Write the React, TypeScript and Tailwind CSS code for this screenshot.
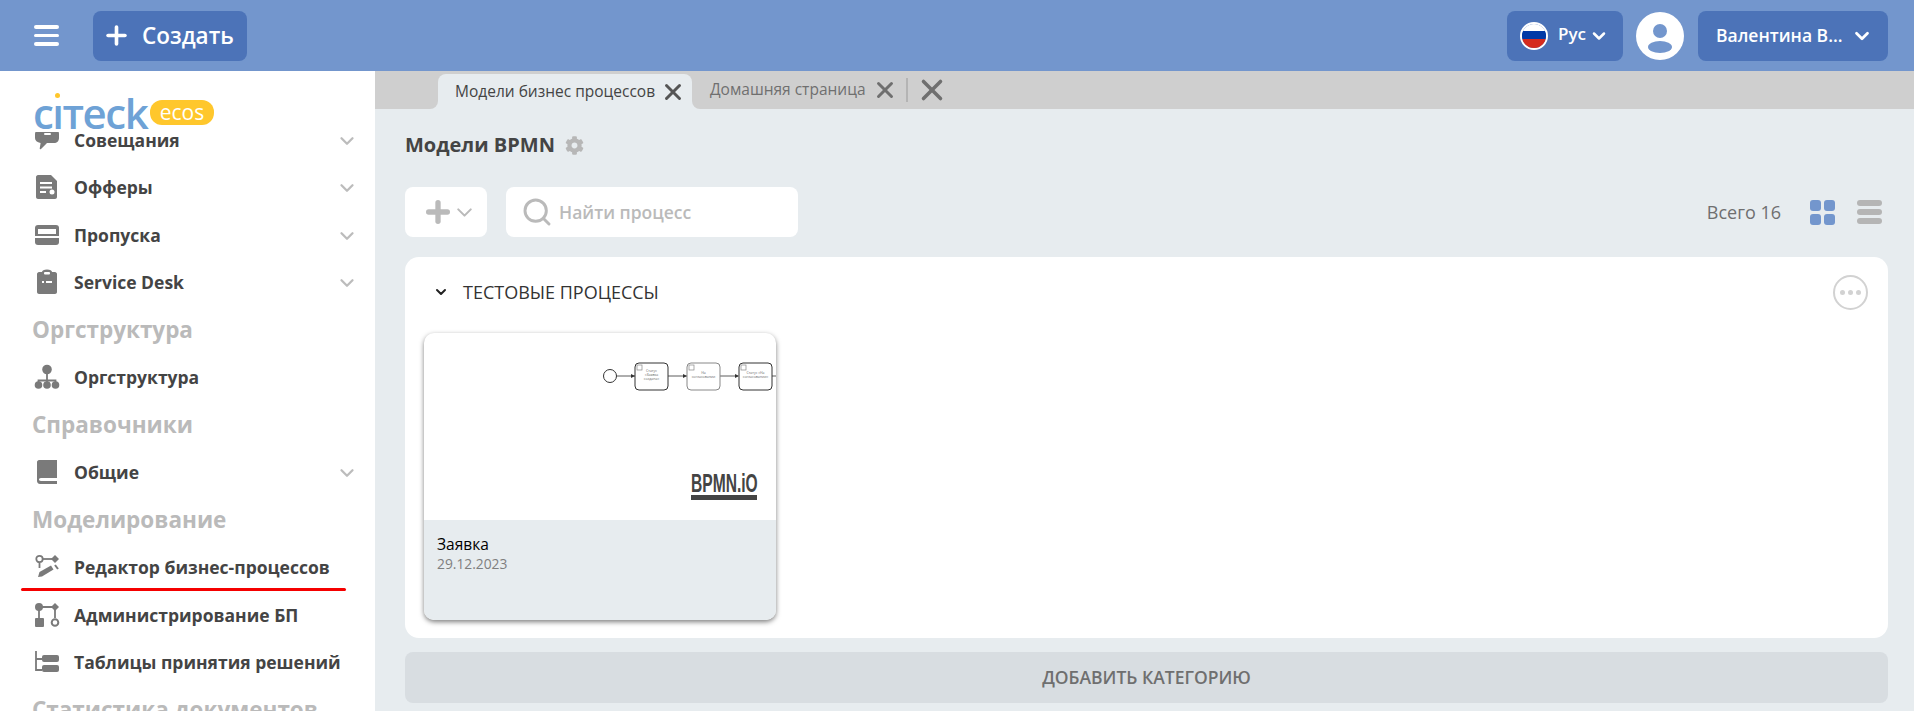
import type React from 'react';
import { ChevronDown, Plus, Search, X } from 'lucide-react';
import { FaCog } from 'react-icons/fa';

const fontStack = { fontFamily: '"Open Sans", "Noto Sans", sans-serif' };

function BubbleIcon() {
  return (
    <svg width="26" height="26" viewBox="0 0 26 26">
      <path d="M7 2h13c3 0 5 2 5 5v4c0 3-2 5-5 5h-7l-6 6c-1 .8-1.500 0-1.200-1l.8-5C3 15.500 1 13.500 1 11V7c0-3 3-5 6-5z" fill="#7a7a7a" />
      <rect x="10" y="6" width="7" height="2" rx="1" fill="#fff" />
    </svg>
  );
}

function DocIcon() {
  return (
    <svg width="26" height="26" viewBox="0 0 26 26">
      <path d="M4 1h13l6 6v16c0 1-1 2-2 2H4c-1 0-2-1-2-2V3c0-1 1-2 2-2z" fill="#7a7a7a" />
      <rect x="6" y="8" width="12" height="2" fill="#fff" />
      <rect x="6" y="12.500" width="12" height="2" fill="#fff" />
      <rect x="6" y="17" width="6" height="2" fill="#fff" />
      <circle cx="18" cy="18" r="2.500" fill="#fff" />
    </svg>
  );
}

function PassIcon() {
  return (
    <svg width="26" height="26" viewBox="0 0 26 26">
      <rect x="1" y="3" width="24" height="20" rx="3" fill="#7a7a7a" />
      <rect x="4" y="7" width="18" height="5" fill="#fff" />
      <rect x="1" y="14" width="24" height="2" fill="#fff" />
    </svg>
  );
}

function ClipboardIcon() {
  return (
    <svg width="26" height="26" viewBox="0 0 26 26">
      <path d="M5 3h3c0-1.500 2-2.500 5-2.500S18 1.500 18 3h3c1 0 2 1 2 2v18c0 1-1 2-2 2H5c-1 0-2-1-2-2V5c0-1 1-2 2-2z" fill="#7a7a7a" />
      <rect x="10" y="3" width="6" height="2.500" rx="1" fill="#fff" />
      <rect x="8" y="12" width="2" height="2" fill="#fff" />
      <rect x="12" y="12" width="6" height="2" fill="#fff" />
    </svg>
  );
}

function OrgIcon() {
  return (
    <svg width="26" height="26" viewBox="0 0 26 26">
      <circle cx="13" cy="5.500" r="4.800" fill="#7a7a7a" />
      <path d="M13 9v12M4.500 21v-4.500h17V21" stroke="#7a7a7a" strokeWidth="1.800" fill="none" />
      <circle cx="4.500" cy="21" r="3.800" fill="#7a7a7a" />
      <circle cx="13" cy="21" r="3.800" fill="#7a7a7a" />
      <circle cx="21.500" cy="21" r="3.800" fill="#7a7a7a" />
    </svg>
  );
}

function BookIcon() {
  return (
    <svg width="26" height="26" viewBox="0 0 26 26">
      <path d="M5 1h18v18H7c-1.500 0-2 .8-2 1.500S5.500 22 7 22h16v3H6c-2 0-3-1.500-3-3V3c0-1 1-2 2-2z" fill="#7a7a7a" />
    </svg>
  );
}

function EditorIcon() {
  return (
    <svg width="26" height="26" viewBox="0 0 26 26">
      <circle cx="5.500" cy="5" r="3.200" stroke="#7a7a7a" strokeWidth="1.800" fill="none" />
      <path d="M9 5h10" stroke="#7a7a7a" strokeWidth="1.800" />
      <path d="M21 1l4 4-4 4-4-4z" fill="#7a7a7a" />
      <path d="M5.500 9v5" stroke="#7a7a7a" strokeWidth="1.800" />
      <path d="M4 23l1.500-5L17 11.500l2.500 4L8 22.500z" fill="#7a7a7a" />
      <path d="M21 11l3 4" stroke="#7a7a7a" strokeWidth="2" />
    </svg>
  );
}

function AdminIcon() {
  return (
    <svg width="26" height="26" viewBox="0 0 26 26">
      <circle cx="5" cy="5" r="4" fill="#7a7a7a" />
      <path d="M21 1l4 4-4 4-4-4z" fill="#7a7a7a" />
      <path d="M8 5h10M5 8v8M21 8v8" stroke="#7a7a7a" strokeWidth="1.800" />
      <rect x="1" y="16" width="9" height="9" rx="1" fill="#7a7a7a" />
      <circle cx="21" cy="20.500" r="3.300" stroke="#7a7a7a" strokeWidth="2" fill="none" />
    </svg>
  );
}

function TablesIcon() {
  return (
    <svg width="26" height="26" viewBox="0 0 26 26">
      <path d="M2 2v19h6M2 10h6" stroke="#7a7a7a" strokeWidth="1.800" fill="none" />
      <rect x="8" y="6" width="17" height="7" rx="2" fill="#7a7a7a" />
      <rect x="8" y="16" width="17" height="7" rx="2" fill="#7a7a7a" />
    </svg>
  );
}

type SideRow =
  | { kind: 'head'; label: string }
  | { kind: 'item'; label: string; icon: React.ReactNode; arrow?: boolean; marked?: boolean };

const rows: SideRow[] = [
  { kind: 'item', label: 'Совещания', icon: <BubbleIcon />, arrow: true },
  { kind: 'item', label: 'Офферы', icon: <DocIcon />, arrow: true },
  { kind: 'item', label: 'Пропуска', icon: <PassIcon />, arrow: true },
  { kind: 'item', label: 'Service Desk', icon: <ClipboardIcon />, arrow: true },
  { kind: 'head', label: 'Оргструктура' },
  { kind: 'item', label: 'Оргструктура', icon: <OrgIcon /> },
  { kind: 'head', label: 'Справочники' },
  { kind: 'item', label: 'Общие', icon: <BookIcon />, arrow: true },
  { kind: 'head', label: 'Моделирование' },
  { kind: 'item', label: 'Редактор бизнес-процессов', icon: <EditorIcon />, marked: true },
  { kind: 'item', label: 'Администрирование БП', icon: <AdminIcon /> },
  { kind: 'item', label: 'Таблицы принятия решений', icon: <TablesIcon /> },
  { kind: 'head', label: 'Статистика документов' },
];

function Sidebar() {
  return (
    <aside className="flex h-full w-[375px] shrink-0 flex-col bg-white">
      <div className="flex h-[61px] shrink-0 items-end pb-[7px] pl-[33px]">
        <div className="relative flex items-center">
          <span className="w-[113px] text-[42px] leading-[25px] font-semibold tracking-[-1.500px] whitespace-nowrap text-[#6ea2d6]">
            cıтeck
          </span>
          <span className="absolute top-[-7px] left-[22px] h-[5px] w-[5px] rounded-full bg-[#ffc72c]" />
          <span className="ml-[4px] flex h-[25px] w-[64px] items-center justify-center rounded-[12px] bg-[#ffc72c] text-[21px] leading-none text-white">
            ecos
          </span>
        </div>
      </div>
      <div className="flex-1 overflow-hidden">
        <div className="-mt-[16px]">
          {rows.map((row, i) =>
            row.kind === 'head' ? (
              <div key={i} className="flex h-[47.5px] items-center pl-[32px] text-[22.500px] font-bold whitespace-nowrap text-[#bababa]">
                {row.label}
              </div>
            ) : (
              <div key={i} className="relative flex h-[47.5px] items-center pl-[34px] pr-[17px]">
                <div className="w-[40px] shrink-0">{row.icon}</div>
                <span className="flex-1 text-[17.500px] font-bold whitespace-nowrap text-[#444444]">{row.label}</span>
                {row.arrow && <ChevronDown size={22} strokeWidth={2.500} className="mt-[2px] text-[#bcbcbc]" />}
                {row.marked && <div className="absolute top-[44px] left-[21px] h-[3px] w-[325px] rounded-full bg-[#f50000]" />}
              </div>
            )
          )}
        </div>
      </div>
    </aside>
  );
}

function Header() {
  return (
    <header className="flex h-[71px] shrink-0 items-center bg-[#7396cd] pr-[26px] pl-[34px]">
      <div className="flex w-[25px] flex-col gap-[5px]">
        <div className="h-[3.500px] rounded-full bg-white" />
        <div className="h-[3.500px] rounded-full bg-white" />
        <div className="h-[3.500px] rounded-full bg-white" />
      </div>
      <button className="ml-[34px] flex h-[50px] w-[154px] items-center rounded-[8px] bg-[#4c73b8] pl-[9px] text-white">
        <Plus size={29} strokeWidth={3} />
        <span className="ml-[11px] text-[22.500px] font-semibold">Создать</span>
      </button>
      <div className="flex-1" />
      <button className="flex h-[50px] w-[116px] items-center rounded-[8px] bg-[#4c73b8] pl-[13px] text-white">
        <span className="flex h-[28px] w-[28px] flex-col overflow-hidden rounded-full border-2 border-white">
          <span className="h-[7px] bg-white" />
          <span className="h-[8px] bg-[#0039a6]" />
          <span className="flex-1 bg-[#d52b1e]" />
        </span>
        <span className="mt-[-4px] ml-[10px] text-[17px] font-semibold">Рус</span>
        <ChevronDown size={20} strokeWidth={3} className="ml-[3px]" />
      </button>
      <div className="ml-[13px] flex h-[48px] w-[48px] flex-col items-center overflow-hidden rounded-full bg-white pt-[12px]">
        <div className="h-[14px] w-[14px] rounded-full bg-[#7396cd]" />
        <div className="mt-[3px] h-[12px] w-[24px] rounded-[50%] bg-[#7396cd]" />
      </div>
      <button className="ml-[14px] flex h-[50px] w-[190px] items-center rounded-[8px] bg-[#4c73b8] pl-[18px] text-white">
        <span className="text-[17.500px] font-semibold whitespace-nowrap">Валентина В...</span>
        <ChevronDown size={22} strokeWidth={3} className="ml-[8px]" />
      </button>
    </header>
  );
}

function Tabs() {
  return (
    <div className="flex h-[38px] shrink-0 bg-[#e7ecef]">
      <div className="w-[63px] rounded-br-[8px] bg-[#cfcfcf]" />
      <div className="bg-[#cfcfcf] pt-[3px]">
        <div className="flex h-[35px] w-[254px] items-center rounded-t-[8px] bg-[#e7ecef] pl-[17px] text-[#444444]">
          <span className="text-[15.500px] whitespace-nowrap">Модели бизнес процессов</span>
          <X size={26} strokeWidth={2.700} className="ml-[5px] shrink-0 text-[#555555]" />
        </div>
      </div>
      <div className="flex flex-1 items-center rounded-bl-[8px] bg-[#cfcfcf] pl-[18px] text-[#6f6f6f]">
        <span className="text-[15.500px] whitespace-nowrap">Домашняя страница</span>
        <X size={26} strokeWidth={2.700} className="ml-[6px] text-[#6f6f6f]" />
        <div className="ml-[8px] h-[24px] w-[2px] bg-[#b4b4b4]" />
        <X size={34} strokeWidth={2.500} className="ml-[7px] text-[#6f6f6f]" />
      </div>
    </div>
  );
}

function Task({ x, label, muted }: { x: number; label: string[]; muted?: boolean }) {
  return (
    <g>
      <rect x={x} y="30" width="33" height="27" rx="4" fill="#fff" stroke={muted ? '#888' : '#333'} strokeWidth="1" />
      <rect x={x + 2} y="32" width="5" height="5" fill="none" stroke="#888" strokeWidth="0.700" />
      {label.map((l, i) => (
        <text key={i} x={x + 16.500} y={44 + i * 4 - label.length * 2 + 1} fontSize="3.500" textAnchor="middle" fill="#666">
          {l}
        </text>
      ))}
    </g>
  );
}

function DiagramPreview() {
  return (
    <svg width="352" height="80" viewBox="0 0 352 80" className="block shrink-0">
      <circle cx="186" cy="43" r="6.500" fill="#fff" stroke="#333" strokeWidth="1" />
      <path d="M192.500 43H211M244 43H263M296 43H314M348 43H353" stroke="#333" strokeWidth="0.800" />
      <path d="M207 41l4 2-4 2zM259 41l4 2-4 2zM311 41l4 2-4 2z" fill="#333" />
      <Task x={211} label={['Статус', '«Заявка', 'создана»']} />
      <Task x={263} label={['На', 'согласовании']} muted />
      <Task x={315} label={['Статус «На', 'согласовании»']} />
    </svg>
  );
}

function ProcessCard() {
  return (
    <div className="ml-[19px] flex h-[287px] w-[352px] flex-col overflow-hidden rounded-[10px] bg-white shadow-[0_2px_5px_rgba(0,0,0,0.5)]">
      <div className="flex h-[187px] shrink-0 flex-col">
        <DiagramPreview />
        <div className="mt-auto mr-[19px] mb-[20px] w-[66px] self-end border-b-[5px] border-[#444444]">
          <div className="w-[110px] origin-left scale-x-[0.6] text-[26px] leading-[23px] font-bold text-[#444444]" style={{ fontFamily: '"Liberation Sans", sans-serif' }}>
            BPMN.iO
          </div>
        </div>
      </div>
      <div className="flex-1 bg-[#e7ecef] pt-[14px] pl-[13px]">
        <div className="text-[15.500px] leading-[20px] text-black">Заявка</div>
        <div className="text-[13.800px] leading-[20px] text-[#7f7f7f]">29.12.2023</div>
      </div>
    </div>
  );
}

function Content() {
  return (
    <div className="flex-1 overflow-hidden bg-[#e7ecef] pr-[26px] pl-[30px]">
      <div className="flex h-[72px] items-center gap-[10px]">
        <span className="text-[20px] font-bold text-[#444444]">Модели BPMN</span>
        <FaCog size={19} className="text-[#b7b7b7]" />
      </div>
      <div className="mt-[6px] flex h-[50px] items-center">
        <button className="flex h-[50px] w-[82px] items-center rounded-[8px] bg-white pl-[17px] text-[#bababa]">
          <Plus size={32} strokeWidth={4} className="shrink-0" />
          <ChevronDown size={25} strokeWidth={2} className="-ml-[2px] shrink-0" />
        </button>
        <div className="ml-[19px] flex h-[50px] w-[292px] items-center rounded-[8px] bg-white pl-[15px] text-[#bababa]">
          <Search size={32} strokeWidth={2.200} />
          <span className="ml-[6px] text-[17.500px] font-semibold">Найти процесс</span>
        </div>
        <div className="flex-1" />
        <span className="text-[18px] text-[#6f6f6f]">Всего 16</span>
        <div className="ml-[29px] grid h-[25px] w-[25px] grid-cols-2 gap-[3px]">
          <div className="rounded-[3px] bg-[#7396cd]" />
          <div className="rounded-[3px] bg-[#7396cd]" />
          <div className="rounded-[3px] bg-[#7396cd]" />
          <div className="rounded-[3px] bg-[#7396cd]" />
        </div>
        <div className="mr-[6px] ml-[22px] flex w-[25px] flex-col gap-[3px]">
          <div className="h-[6px] rounded-[3px] bg-[#b5b5b5]" />
          <div className="h-[6px] rounded-[3px] bg-[#b5b5b5]" />
          <div className="h-[6px] rounded-[3px] bg-[#b5b5b5]" />
        </div>
      </div>
      <div className="mt-[20px] h-[381px] rounded-[14px] bg-white">
        <div className="mb-[6px] flex h-[70px] items-center pl-[28px] pr-[20px]">
          <ChevronDown size={16} strokeWidth={3} className="text-[#222222]" />
          <span className="ml-[14px] text-[18px] text-[#333333]">ТЕСТОВЫЕ ПРОЦЕССЫ</span>
          <div className="flex-1" />
          <div className="flex h-[35px] w-[35px] items-center justify-center gap-[3px] rounded-full border-2 border-[#d2d2d2]">
            <div className="h-[5px] w-[5px] rounded-full bg-[#d2d2d2]" />
            <div className="h-[5px] w-[5px] rounded-full bg-[#d2d2d2]" />
            <div className="h-[5px] w-[5px] rounded-full bg-[#d2d2d2]" />
          </div>
        </div>
        <ProcessCard />
      </div>
      <button className="mt-[14px] flex h-[51px] w-full items-center justify-center rounded-[8px] bg-[#d8dde1] text-[17.500px] font-semibold text-[#6f6f6f]">
        ДОБАВИТЬ КАТЕГОРИЮ
      </button>
    </div>
  );
}

export default function App() {
  return (
    <div className="flex h-[711px] flex-col overflow-hidden" style={fontStack}>
      <Header />
      <div className="flex min-h-0 flex-1">
        <Sidebar />
        <main className="flex min-w-0 flex-1 flex-col">
          <Tabs />
          <Content />
        </main>
      </div>
    </div>
  );
}
